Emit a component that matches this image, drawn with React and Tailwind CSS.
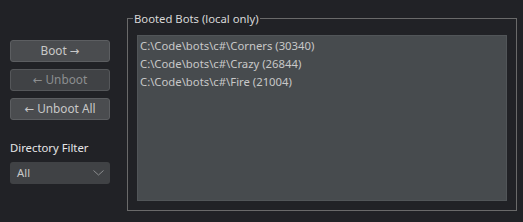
export default function App() {
  const bots = [
    'C:\\Code\\bots\\c#\\Corners (30340)',
    'C:\\Code\\bots\\c#\\Crazy (26844)',
    'C:\\Code\\bots\\c#\\Fire (21004)',
  ];

  const arrow = 'font-["DejaVu_Sans"] text-[11.5px]';

  return (
    <div
      className="w-[523px] h-[222px] bg-[#212226] text-[#d0d0d0] text-[11.3px] flex"
      style={{ fontFamily: '"Noto Sans", "Open Sans", sans-serif' }}
    >
      <div className="w-[127px] pl-[10px] pt-[40px] flex flex-col">
        <button className="w-[100px] h-[22px] rounded-[3px] bg-[#4a4c4f] border border-[#5c5e61] text-[#c8c8c8] text-[11.8px] leading-none">
          Boot <span className={arrow}>→</span>
        </button>
        <button className="mt-[7px] w-[100px] h-[22px] rounded-[3px] bg-[#404245] border border-[#55575a] text-[#8c8e90] text-[11.8px] leading-none">
          <span className={arrow}>←</span> Unboot
        </button>
        <button className="mt-[7px] w-[100px] h-[22px] rounded-[3px] bg-[#4a4c4f] border border-[#5c5e61] text-[#c8c8c8] text-[11.8px] leading-none">
          <span className={arrow}>←</span> Unboot All
        </button>
        <div className="mt-[22px] text-[#e6e6e6] leading-none">Directory Filter</div>
        <div className="mt-[9px] w-[100px] h-[22px] rounded-[3px] bg-[#404245] flex items-center pl-[7px] pr-[6px] text-[#c8c8c8]">
          <span className="flex-1">All</span>
          <svg width="11" height="6" viewBox="0 0 11 6" fill="none">
            <path d="M0.5 0.5 L5.5 5 L10.5 0.5" stroke="#8a8c8e" strokeWidth="1" />
          </svg>
        </div>
      </div>
      <div className="relative mt-[18px] w-[390px] h-[193px] border border-[#6a6a6a] px-[9px] pt-[16px]">
        <div className="absolute left-[5px] top-[-9px] px-[1px] bg-[#212226] text-[#d8d8d8] leading-[18px]">
          Booted Bots (local only)
        </div>
        <div className="h-[166px] bg-[#474b4e] border border-[#515558] pt-[1px] pl-[2px]">
          {bots.map((b) => (
            <div key={b} className="h-[18px] leading-[18px] text-[#c8c8c8]">
              {b}
            </div>
          ))}
        </div>
      </div>
    </div>
  );
}
